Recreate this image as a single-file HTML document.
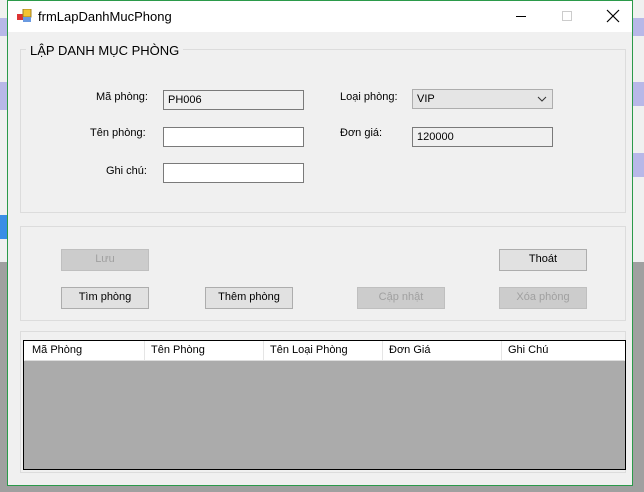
<!DOCTYPE html><html><head><meta charset="utf-8"><style>
*{margin:0;padding:0;box-sizing:border-box}
body{width:644px;height:492px;overflow:hidden;background:#a0a0a0;font-family:"Liberation Sans",sans-serif;font-size:11px;position:relative}
.a{position:absolute}
.win{left:7px;top:0;width:626px;height:486px;border:1px solid #2b9a4a;background:#f0f0f0}
.gb{border:1px solid #dcdcdc}
.tb{border:1px solid #7a7a7a;background:#fff;padding:3px 0 0 4px;height:20px}
.btn{border:1px solid #adadad;background:#e1e1e1;text-align:center;line-height:19px;height:22px;width:88px}
.dis{border-color:#bfbfbf;background:#cccccc;color:#a0a0a0}
.hd{top:0;height:19px;line-height:19px;padding-left:6px;border-right:1px solid #e5e5e5}
</style></head><body>
<div class="a" style="left:0;top:0;width:7px;height:262px;background:#f0f0f0"></div>
<div class="a" style="left:0;top:18px;width:7px;height:18px;background:#b8b8e8"></div>
<div class="a" style="left:0;top:82px;width:7px;height:28px;background:#b8b8e8"></div>
<div class="a" style="left:0;top:215px;width:7px;height:24px;background:#3a8ee6"></div>
<div class="a" style="left:633px;top:0;width:11px;height:262px;background:#f0f0f0"></div>
<div class="a" style="left:633px;top:18px;width:11px;height:18px;background:#b8b8e8"></div>
<div class="a" style="left:633px;top:82px;width:11px;height:24px;background:#b8b8e8"></div>
<div class="a" style="left:633px;top:153px;width:11px;height:24px;background:#b8b8e8"></div>
<div class="win a">
 <div class="a" style="left:0;top:0;width:624px;height:31px;background:#fff"></div>
 <svg class="a" style="left:9px;top:8px" width="16" height="14"><rect x="0" y="5" width="6" height="6" fill="#d33"/><rect x="6" y="0" width="8" height="8" fill="#f4c430" stroke="#a08020"/><rect x="6" y="8" width="8" height="5" fill="#6a9ae0"/></svg>
 <div class="a" style="left:30px;top:8px;font-size:13px">frmLapDanhMucPhong</div>
 <div class="a" style="left:508px;top:15px;width:10px;height:1px;background:#000"></div>
 <div class="a" style="left:554px;top:10px;width:10px;height:10px;border:1px solid #ccc"></div>
 <svg class="a" style="left:598px;top:8px" width="14" height="14"><path d="M1 1L13 13M13 1L1 13" stroke="#000" stroke-width="1.2"/></svg>
 <div class="a gb" style="left:12px;top:48px;width:606px;height:164px"></div>
 <div class="a" style="left:18px;top:42px;background:#f0f0f0;padding:0 4px;font-size:13px">LẬP DANH MỤC PHÒNG</div>
 <div class="a" style="left:88px;top:90px">Mã phòng:</div>
 <div class="a tb" style="left:155px;top:89px;width:141px;background:#f0f0f0">PH006</div>
 <div class="a" style="left:82px;top:126px">Tên phòng:</div>
 <div class="a tb" style="left:155px;top:126px;width:141px"></div>
 <div class="a" style="left:98px;top:164px">Ghi chú:</div>
 <div class="a tb" style="left:155px;top:162px;width:141px"></div>
 <div class="a" style="left:332px;top:90px">Loại phòng:</div>
 <div class="a tb" style="left:404px;top:88px;width:141px;background:#e5e5e5;border-color:#adadad">VIP</div>
 <svg class="a" style="left:529px;top:94px" width="10" height="8"><path d="M1 2L5 6L9 2" stroke="#333" fill="none"/></svg>
 <div class="a" style="left:332px;top:126px">Đơn giá:</div>
 <div class="a tb" style="left:404px;top:126px;width:141px;background:#f0f0f0">120000</div>
 <div class="a gb" style="left:12px;top:225px;width:606px;height:95px"></div>
 <div class="a btn dis" style="left:53px;top:248px">Lưu</div>
 <div class="a btn" style="left:491px;top:248px">Thoát</div>
 <div class="a btn" style="left:53px;top:286px">Tìm phòng</div>
 <div class="a btn" style="left:197px;top:286px">Thêm phòng</div>
 <div class="a btn dis" style="left:349px;top:286px">Cập nhật</div>
 <div class="a btn dis" style="left:491px;top:286px">Xóa phòng</div>
 <div class="a gb" style="left:12px;top:330px;width:606px;height:142px"></div>
 <div class="a" style="left:15px;top:339px;width:603px;height:130px;border:1px solid #000;background:#ababab">
  <div class="a" style="left:0;top:0;width:601px;height:20px;background:#fff;border:1px solid #fff;border-bottom:1px solid #ddd"></div>
  <div class="a hd" style="left:2px;width:119px">Mã Phòng</div>
  <div class="a hd" style="left:121px;width:119px">Tên Phòng</div>
  <div class="a hd" style="left:240px;width:119px">Tên Loại Phòng</div>
  <div class="a hd" style="left:359px;width:119px">Đơn Giá</div>
  <div class="a hd" style="left:478px;width:121px;border:none">Ghi Chú</div>
 </div>
</div>
</body></html>
